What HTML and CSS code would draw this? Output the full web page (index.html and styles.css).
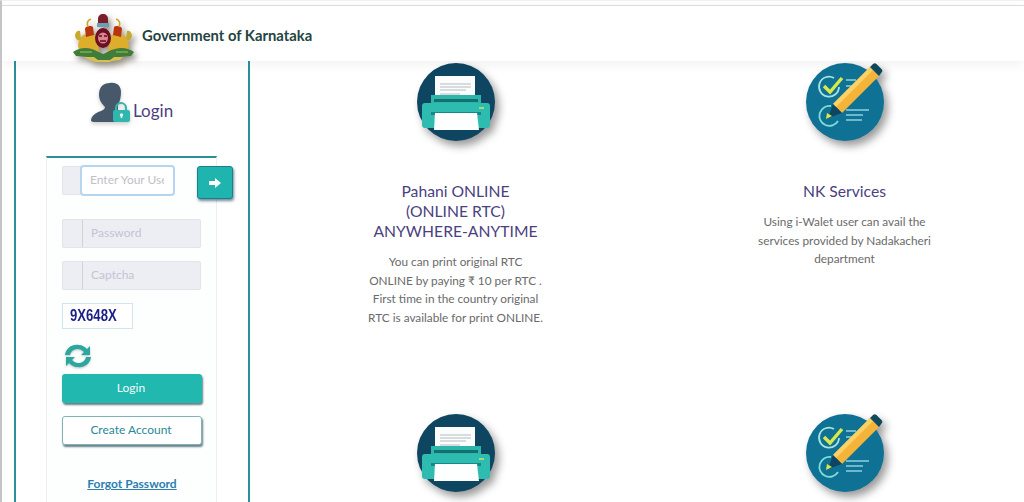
FILE: index.html
```html
<!DOCTYPE html>
<html lang="en">
<head>
    <meta charset="UTF-8">
    <title>Government of Karnataka</title>
    <link rel="stylesheet" href="styles.css">
</head>
<body>
    <svg class="defs" width="0" height="0">
        <symbol id="printer-icon" viewBox="0 0 78 78">
            <circle cx="39" cy="39" r="39" fill="#0e4560"/>
            <rect x="18" y="13" width="40" height="27" fill="#fbfcfc"/>
            <path d="M23 21h31M23 24h31M23 27h26M23 31h20M23 35h31" stroke="#b4bcc2" stroke-width="1"/>
            <path d="M14 32h50v8H14z" fill="#2cb5ab"/>
            <path d="M8 40h62a3 3 0 0 1 3 3v19a3 3 0 0 1-3 3H8a3 3 0 0 1-3-3V43a3 3 0 0 1 3-3z" fill="#2fbcb0"/>
            <rect x="17" y="36" width="44" height="3" fill="#14706e"/>
            <rect x="14" y="49" width="50" height="3" fill="#17888a"/>
            <rect x="62" y="44" width="5" height="2" fill="#a5dc6e"/>
            <path d="M18 50h42l2 17H17z" fill="#fdfefe"/>
        </symbol>
        <symbol id="checklist-icon" viewBox="0 0 78 78">
            <circle cx="39" cy="39" r="39" fill="#0f7295"/>
            <path d="M33 24a10 10 0 1 1-5-9" fill="none" stroke="#a7e3df" stroke-width="1.8"/>
            <path d="M18 23l6 6 12-14" fill="none" stroke="#d9e84a" stroke-width="3.4"/>
            <path d="M40 17h10M40 23h18M40 28h12" stroke="#8fd0de" stroke-width="1.5"/>
            <path d="M32 58a10 10 0 1 1-7-15" fill="none" stroke="#7fdcd8" stroke-width="1.8"/>
            <path d="M40 47h23M40 52h17M40 57h16" stroke="#8fd0de" stroke-width="1.5"/>
            <path d="M27 41L64 4l9 9-37 37z" fill="#f4b43a"/>
            <path d="M27 41L64 4l3 3-37 37z" fill="#fbd266"/>
            <path d="M64 4l3-3a2.5 2.5 0 0 1 3.5 0l5 5a2.5 2.5 0 0 1 0 3.500l-2.500 3.500z" fill="#114a5e"/>
            <path d="M27 41l9 9-14 5z" fill="#0e4560"/>
            <path d="M21 50l5 3-6 3z" fill="#d9e84a"/>
        </symbol>
    </svg>

    <header class="site-header">
        <svg class="emblem" viewBox="0 0 66 48">
            <path d="M3 22c0-4 3-6 5-5l1 8c-2 3-5 1-6-3zM60 22c0-4-3-6-5-5l-1 8c2 3 5 1 6-3z" fill="#c9a92c"/>
            <path d="M6 32c1-7 4-11 8-12l11 1 2 17H8z" fill="#dcae2c"/>
            <path d="M57 32c-1-7-4-11-8-12l-11 1-2 17h19z" fill="#dcae2c"/>
            <path d="M13 15c0-3 6-4 8-2l1 8-8 2z" fill="#b8350f"/>
            <path d="M50 15c0-3-6-4-8-2l-1 8 8 2z" fill="#b8350f"/>
            <path d="M16 13c-2-4 0-7 3-8M47 13c2-4 0-7-3-8" fill="none" stroke="#c9a92c" stroke-width="1.6"/>
            <path d="M1 38c6-4 12-5 19-3 5 2 9 4 11 5 3-1 7-4 12-5 7-2 13-1 19 3l-3 4-12 1-6 3H22l-6-3-12-1z" fill="#3f7d3c"/>
            <path d="M8 38h12M44 38h12" stroke="#a8c04a" stroke-width="1.2"/>
            <path d="M12 43h10l4 3h12l4-3h9l-3 3-8 1-3 1H24l-4-1z" fill="#d8c04c"/>
            <rect x="25" y="9" width="12" height="4" fill="#6b9fb8"/>
            <path d="M26 5c0-3 2-5 5-5s5 2 5 5v4H26z" fill="#7a1f2a"/>
            <ellipse cx="31" cy="24" rx="8" ry="10" fill="#6d0f22"/>
            <ellipse cx="31" cy="24" rx="5" ry="5.500" fill="#d9868f"/>
            <path d="M27 22h3M32 22h3M28 27h6" stroke="#5c0c1c" stroke-width="1.400"/>
        </svg>
        <span class="site-title">Government of Karnataka</span>
    </header>

    <div class="main">
        <aside class="sidebar">
            <div class="login-head">
                <svg class="user-lock" viewBox="0 0 40 41">
                    <path d="M0 39c0-5 4-8 10-10 2-1 4-2 4-4-3-3-6-7-6-12C8 5 12 1 19 1c7-1 11 3 11 9 0 5-1 9-3 13v17H2z" fill="#47586a"/>
                    <path d="M25 29v-3a5 5 0 0 1 10 0v3" fill="none" stroke="#2fb7ae" stroke-width="2.200"/>
                    <rect x="22" y="28" width="17" height="12" rx="2" fill="#2fb7ae"/>
                    <circle cx="30.500" cy="33" r="1.700" fill="#e4f6f4"/>
                    <rect x="29.700" y="33" width="1.600" height="3" fill="#e4f6f4"/>
                </svg>
                <span class="login-title">Login</span>
            </div>

            <form class="login-card">
                <div class="user-row">
                    <div class="field field-active">
                        <span class="addon"></span>
                        <span class="field-input placeholder">Enter Your User</span>
                    </div>
                    <span class="go-btn">
                        <svg width="12" height="10" viewBox="0 0 12 10"><path d="M0 3h6V0l6 5-6 5V7H0z" fill="#fff"/></svg>
                    </span>
                </div>
                <div class="field field-off">
                    <span class="addon"></span>
                    <span class="field-input placeholder">Password</span>
                </div>
                <div class="field field-off">
                    <span class="addon"></span>
                    <span class="field-input placeholder">Captcha</span>
                </div>
                <div class="captcha-code"><span class="captcha-text">9X648X</span></div>
                <svg class="refresh" viewBox="0 0 32 24">
                    <path d="M3 11C4 4 10 0 17 1c3 0 6 2 8 4l3-3v9h-9l3-3c-2-2-4-3-6-3-4 0-7 2-8 6z" fill="#2aa79f"/>
                    <path d="M29 13c-1 7-7 11-14 10-3 0-6-2-8-4l-3 3v-9h9l-3 3c2 2 4 3 6 3 4 0 7-2 8-6z" fill="#2aa79f"/>
                </svg>
                <button class="btn btn-primary" type="button">Login</button>
                <button class="btn btn-outline" type="button">Create Account</button>
                <a class="forgot" href="#">Forgot Password</a>
            </form>
        </aside>

        <main class="services">
            <section class="service">
                <svg class="service-icon"><use href="#printer-icon"/></svg>
                <h3>Pahani ONLINE<br>(ONLINE RTC)<br>ANYWHERE-ANYTIME</h3>
                <p>You can print original RTC ONLINE by paying ₹ 10 per RTC . First time in the country original RTC is available for print ONLINE.</p>
            </section>
            <section class="service">
                <svg class="service-icon"><use href="#checklist-icon"/></svg>
                <h3>NK Services</h3>
                <p>Using i-Walet user can avail the services provided by Nadakacheri department</p>
            </section>
            <section class="service">
                <svg class="service-icon"><use href="#printer-icon"/></svg>
            </section>
            <section class="service">
                <svg class="service-icon"><use href="#checklist-icon"/></svg>
            </section>
        </main>
    </div>
</body>
</html>
```

FILE: styles.css
```css
html, body {
    margin: 0;
    padding: 0;
    height: 502px;
    overflow: hidden;
}
body {
    font-family: 'Lato', sans-serif;
    background: #fff;
    color: #666;
    border-top: 1px solid #f0f0f0;
    border-left: 2px solid #c4c4c4;
    box-sizing: border-box;
}
.defs {
    position: absolute;
}
.site-header {
    display: flex;
    height: 55px;
    margin-top: 4px;
    padding-left: 70px;
    border-top: 1px solid #dcdcdc;
    background: #fff;
    box-shadow: 0 3px 12px rgba(0,0,0,0.06);
    position: relative;
    z-index: 2;
}
.emblem {
    width: 66px;
    height: 48px;
    margin-top: 8px;
    filter: blur(0.3px) drop-shadow(3px 4px 3px rgba(60,50,30,0.55));
}
.site-title {
    margin: 19px 0 0 4px;
    font-size: 14.8px;
    font-weight: 700;
    line-height: 20px;
    color: #24443f;
}
.main {
    display: flex;
    height: 441px;
    overflow: hidden;
}
.sidebar {
    width: 236px;
    height: 441px;
    margin-left: 12px;
    padding: 22px 30px 0;
    border-left: 2px solid #2b8f98;
    border-right: 2px solid #2b8f98;
    box-sizing: border-box;
    flex-shrink: 0;
}
.login-head {
    display: flex;
    align-items: flex-end;
    height: 40px;
    padding-left: 45px;
}
.user-lock {
    width: 40px;
    height: 41px;
    filter: drop-shadow(0 2px 2px rgba(0,0,0,0.2));
}
.login-title {
    margin: 0 0 1px 2px;
    font-size: 17px;
    line-height: 22px;
    color: #4b3f80;
}
.login-card {
    display: flex;
    flex-direction: column;
    align-items: flex-start;
    width: 171px;
    height: 346px;
    margin-top: 33px;
    padding: 8px 0 0 15px;
    border-top: 2px solid #2b8f98;
    border-left: 1px solid #eee;
    border-right: 1px solid #eee;
    background: #fdfefe;
    box-sizing: border-box;
}
.user-row {
    display: flex;
    align-items: flex-start;
    height: 34px;
    margin-bottom: 19px;
}
.field {
    display: flex;
    width: 139px;
    height: 29px;
    margin-bottom: 13px;
    background: #edeef3;
    box-sizing: border-box;
    border: 1px solid #e2e4e8;
    border-radius: 2px;
}
.addon {
    width: 19px;
    flex-shrink: 0;
    border-right: 1px solid #cfd2d8;
}
.field-input {
    flex: 1;
    padding-left: 8px;
    font-size: 12px;
    line-height: 26px;
    overflow: hidden;
    white-space: nowrap;
}
.placeholder {
    color: #c3c3d6;
}
.field-active {
    width: 112px;
    margin: 0;
}
.field-active .addon {
    border-right: 0;
}
.field-active .field-input {
    background: #fff;
    color: #c0c0c8;
    border-right: 9px solid #fff;
    border-radius: 2px;
    box-shadow: 0 0 0 2px #b6d5f0;
}
.go-btn {
    display: flex;
    align-items: center;
    justify-content: center;
    width: 36px;
    height: 33px;
    margin: 0 0 0 23px;
    background: #1fb5ae;
    border: 1px solid #17808a;
    border-radius: 3px;
    box-sizing: border-box;
    box-shadow: 1px 2px 3px rgba(20,60,80,0.6);
}
.captcha-code {
    width: 71px;
    height: 26px;
    padding-left: 7px;
    border: 1px solid #cfe6ee;
    background: #fff;
    box-sizing: border-box;
    font-family: 'Liberation Sans', sans-serif;
    font-size: 16px;
    font-weight: 700;
    line-height: 24px;
    color: #1c1f86;
}
.captcha-text {
    display: inline-block;
    transform: scaleX(0.82);
    transform-origin: left center;
}
.refresh {
    width: 32px;
    height: 24px;
    margin-top: 15px;
    filter: drop-shadow(0 1px 1px rgba(0,0,0,0.25));
}
.btn {
    display: block;
    width: 140px;
    height: 29px;
    margin: 0;
    padding: 0 2px 2px 0;
    border-radius: 3px;
    font-family: 'Lato', sans-serif;
    font-size: 12px;
    box-sizing: border-box;
    box-shadow: 1px 2px 2px rgba(20,60,70,0.65);
}
.btn-primary {
    margin-top: 6px;
    background: #20b8af;
    border: 0;
    color: #f2fbfa;
}
.btn-outline {
    margin-top: 13px;
    background: #fff;
    border: 1px solid #7fb3b8;
    color: #2a8a96;
}
.forgot {
    width: 140px;
    margin-top: 31px;
    text-align: center;
    font-size: 12px;
    font-weight: 700;
    color: #2a7fb0;
}
.services {
    display: grid;
    grid-template-columns: 195px 195px;
    grid-auto-rows: 351px;
    column-gap: 194px;
    padding: 2px 0 0 108px;
}
.service {
    text-align: center;
}
.service-icon {
    display: block;
    width: 78px;
    height: 78px;
    margin: 0 auto;
    overflow: visible;
    filter: drop-shadow(4px 5px 4px rgba(0,0,0,0.4));
}
.service h3 {
    margin: 40px 0 0;
    font-size: 15.7px;
    font-weight: 400;
    line-height: 20px;
    color: #4b3f80;
}
.service p {
    margin: 12px 8px 0;
    font-size: 11.8px;
    line-height: 18.6px;
    color: #6a6a6a;
}
```
